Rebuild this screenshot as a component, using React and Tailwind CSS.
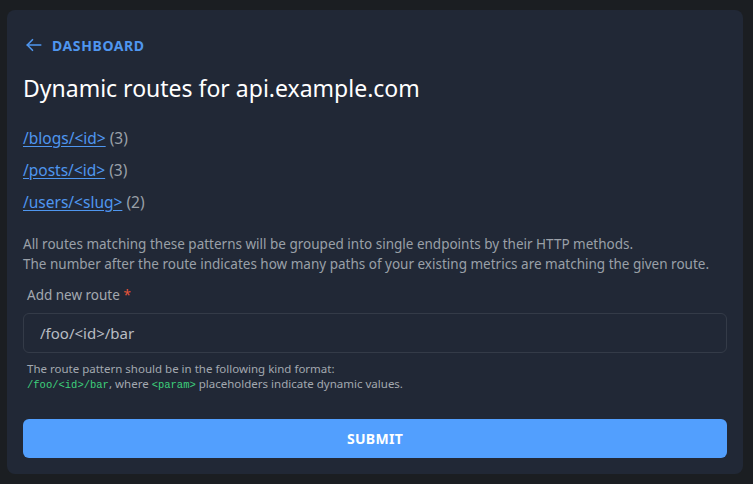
export default function App() {
  const routes = [
    { path: '/blogs/<id>', count: 3 },
    { path: '/posts/<id>', count: 3 },
    { path: '/users/<slug>', count: 2 },
  ]

  return (
    <div
      className="min-h-screen bg-[#1b1e22] pl-[7px] pr-[10px] pt-[10px] pb-[10px]"
      style={{ fontFamily: '"Noto Sans", sans-serif' }}
    >
      <div className="rounded-lg bg-[#212836] px-4 pt-[25px] pb-4">
        {/* Back link */}
        <a href="#" className="flex items-center gap-[9px] text-[#4f96ef] h-[20px] pl-[2px]">
          <svg width="18" height="18" viewBox="0 0 24 24" fill="none" stroke="currentColor" strokeWidth="2.2" strokeLinecap="round" strokeLinejoin="round">
            <path d="M21 12H3" />
            <path d="M10 5l-7 7 7 7" />
          </svg>
          <span className="text-[14px] font-bold tracking-[0.6px]">DASHBOARD</span>
        </a>

        <h1 className="mt-[18px] text-[23px] leading-[30px] text-white">Dynamic routes for api.example.com</h1>

        <ul className="mt-[25px] flex flex-col gap-[12px]">
          {routes.map((r) => (
            <li key={r.path} className="text-[15.5px] leading-[20px]">
              <a href="#" className="text-[#4f96ef] underline underline-offset-2">{r.path}</a>{' '}
              <span className="text-[#9aa0a8]">({r.count})</span>
            </li>
          ))}
        </ul>

        <p className="mt-[22px] text-[13.5px] leading-[20px] text-[#9aa0a8]">
          All routes matching these patterns will be grouped into single endpoints by their HTTP methods.
          <br />
          The number after the route indicates how many paths of your existing metrics are matching the given route.
        </p>

        <label className="mt-[11px] block pl-1 text-[13.5px] leading-[20px] text-[#a3a8b0]">
          Add new route <span className="text-[#e8553a]">*</span>
        </label>
        <input
          className="mt-[8px] block h-[40px] w-full rounded-md border border-[#343b48] bg-transparent px-4 text-[15px] text-[#c4c8ce] outline-none placeholder:text-[#b9bdc3]"
          placeholder="/foo/<id>/bar"
        />
        <div className="mt-[8px] pl-1 text-[11.5px] leading-[15px] text-[#a3a8b0]">
          <div>The route pattern should be in the following kind format:</div>
          <div>
            <code className="font-['Liberation_Mono',monospace] text-[10.5px] text-[#3ed07c]">/foo/&lt;id&gt;/bar</code>, where{' '}
            <code className="font-['Liberation_Mono',monospace] text-[10.5px] text-[#3ed07c]">&lt;param&gt;</code> placeholders indicate dynamic values.
          </div>
        </div>

        <button className="mt-[26px] h-[39px] w-full rounded-md bg-[#529ffe] text-[14px] font-bold tracking-[0.3px] text-white">
          SUBMIT
        </button>
      </div>
    </div>
  )
}
